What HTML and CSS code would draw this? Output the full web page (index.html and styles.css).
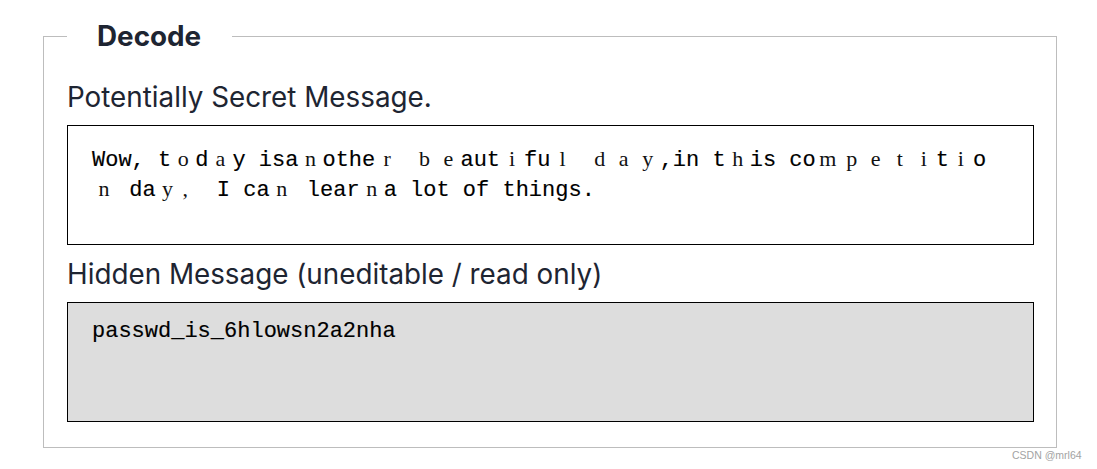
FILE: index.html
```html
<!DOCTYPE html>
<html lang="en">
<head>
<meta charset="utf-8">
<title>Decode</title>
<link rel="stylesheet" href="styles.css">
</head>
<body>
<main class="page">
  <fieldset class="decode">
    <legend class="decode-title">Decode</legend>
    <label class="field-label" for="secret">Potentially Secret Message.</label>
    <div class="box box-secret" id="secret" role="textbox" aria-multiline="true">
      <div class="line">Wow, t<span class="fw">o</span>d<span class="fw">a</span>y isa<span class="fw">n</span>othe<span class="fw">r</span> <span class="fw">b</span><span class="fw">e</span>aut<span class="fw">i</span>fu<span class="fw">l</span> <span class="fw">d</span><span class="fw">a</span><span class="fw">y</span>,in t<span class="fw">h</span>is co<span class="fw">m</span><span class="fw">p</span><span class="fw">e</span><span class="fw">t</span><span class="fw">i</span>t<span class="fw">i</span>o</div>
      <div class="line"><span class="fw">n</span> da<span class="fw">y</span><span class="fw fw-comma">,</span> I ca<span class="fw">n</span> lear<span class="fw">n</span>a lot of things.</div>
    </div>
    <label class="field-label field-label-second" for="hidden">Hidden Message (uneditable / read only)</label>
    <textarea class="box box-hidden" id="hidden" readonly>passwd_is_6hlowsn2a2nha</textarea>
  </fieldset>
  <div class="watermark">CSDN @mrl64</div>
</main>
</body>
</html>
```
FILE: styles.css
```css
* {
  box-sizing: border-box;
}

html, body {
  margin: 0;
  padding: 0;
  background: #ffffff;
}

body {
  font-family: "Inter", "Liberation Sans", sans-serif;
  color: #1e2532;
}

.page {
  position: relative;
  width: 1097px;
  height: 469px;
  padding: 20px 0 0 43px;
}

.decode {
  width: 1014px;
  margin: 0;
  padding: 29px 22px 25px 23px;
  border: 1px solid #bdbdbd;
  min-width: 0;
}

.decode-title {
  padding: 0 31px 0 30px;
  font-size: 27.8px;
  line-height: 32px;
  font-weight: 700;
  color: #1e2532;
}

.field-label {
  display: block;
  font-size: 27.8px;
  line-height: 32px;
  font-weight: 400;
  color: #1e2532;
  margin-bottom: 12px;
}

.field-label-second {
  margin-top: 13px;
}

.box {
  display: block;
  width: 100%;
  height: 120px;
  margin: 0;
  border: 1px solid #000000;
  padding: 16px 24px;
  font-family: "Liberation Mono", "DejaVu Sans Mono", monospace;
  font-size: 22px;
  line-height: 25px;
  color: #000000;
  -webkit-text-stroke: 0.15px #000000;
  background: #ffffff;
  border-radius: 0;
  resize: none;
  overflow: hidden;
  outline: none;
}

.box-secret {
  padding-top: 18px;
  line-height: 30px;
}

.box-hidden {
  background: #dddddd;
}

.line {
  white-space: pre;
  height: 30px;
}

.fw {
  display: inline-block;
  width: 24px;
  text-align: center;
  font-family: "Liberation Serif", "DejaVu Serif", serif;
  font-size: 22px;
  color: #111111;
  -webkit-text-stroke: 0;
}

.fw-comma {
  text-align: left;
  padding-left: 3px;
}

.watermark {
  position: absolute;
  left: 1012px;
  top: 448px;
  font-family: "Liberation Sans", "DejaVu Sans", sans-serif;
  font-size: 10.5px;
  line-height: 14px;
  color: #a3a3a3;
}
```
